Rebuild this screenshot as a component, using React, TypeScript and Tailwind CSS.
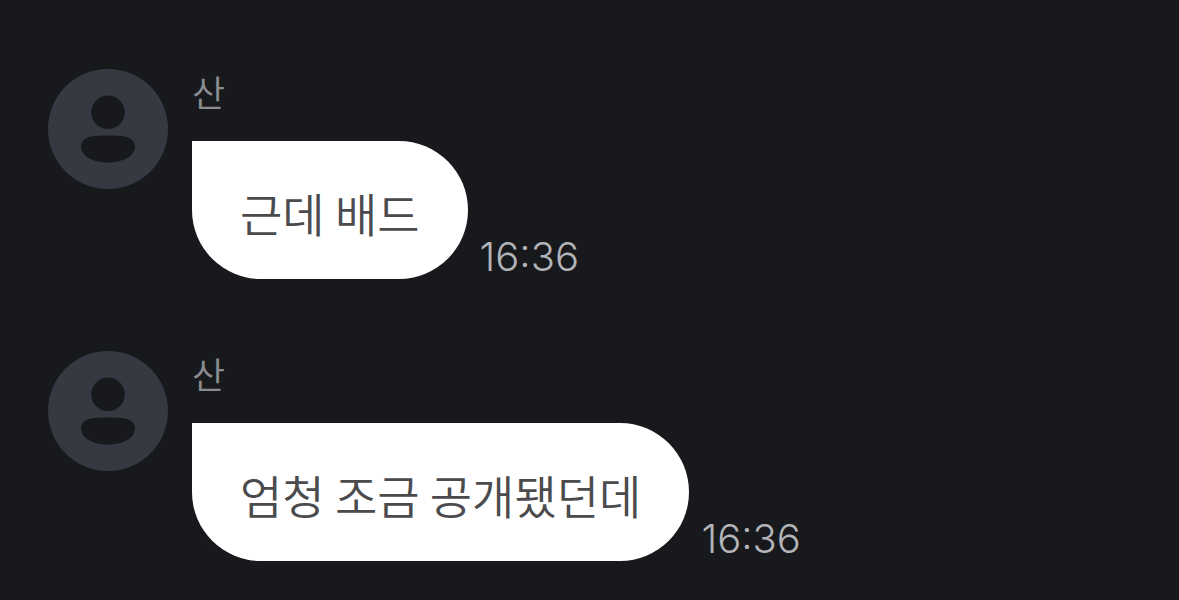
type Message = {
  id: number;
  sender: string;
  text: string;
  time: string;
};

const messages: Message[] = [
  { id: 1, sender: '산', text: '근데 배드', time: '16:36' },
  { id: 2, sender: '산', text: '엄청 조금 공개됐던데', time: '16:36' },
];

function Avatar() {
  return (
    <svg viewBox="0 0 120 120" className="size-30 shrink-0" aria-hidden="true">
      <circle cx="60" cy="60" r="60" fill="#353941" />
      <circle cx="60" cy="43.3" r="16.800" fill="#17191d" />
      <path
        d="M60 66.500c9 0 15 .4 19 1.600 5 1.500 8 5 8 9.400C87 86.500 76 93.500 60 93.500S33 86.500 33 77.500c0-4.400 3-7.900 8-9.400 4-1.200 10-1.600 19-1.600z"
        fill="#17191d"
      />
    </svg>
  );
}

function MessageRow({ message }: { message: Message }) {
  return (
    <li className="flex items-start gap-6">
      <Avatar />
      <div className="min-w-0">
        <p className="h-18 text-[36px] leading-11 font-[350] text-[#8b8c8f]">{message.sender}</p>
        <div className="flex items-end gap-3">
          <p className="rounded-[69px] rounded-tl-none bg-white px-12 pt-[38px] pb-[34px] text-[46px] leading-[66px] font-[350] text-[#4b4b4e]">
            {message.text}
          </p>
          <time className="font-['Inter','Noto_Sans_CJK_KR',sans-serif] text-[40px] leading-11 font-[350] text-[#b3b4b8]">{message.time}</time>
        </div>
      </div>
    </li>
  );
}

export default function App() {
  return (
    <main className="min-h-screen bg-[#17191d] px-12 pt-[69px] pb-9 font-['Noto_Sans_CJK_KR',sans-serif]">
      <ul className="flex flex-col gap-18">
        {messages.map((message) => (
          <MessageRow key={message.id} message={message} />
        ))}
      </ul>
    </main>
  );
}
